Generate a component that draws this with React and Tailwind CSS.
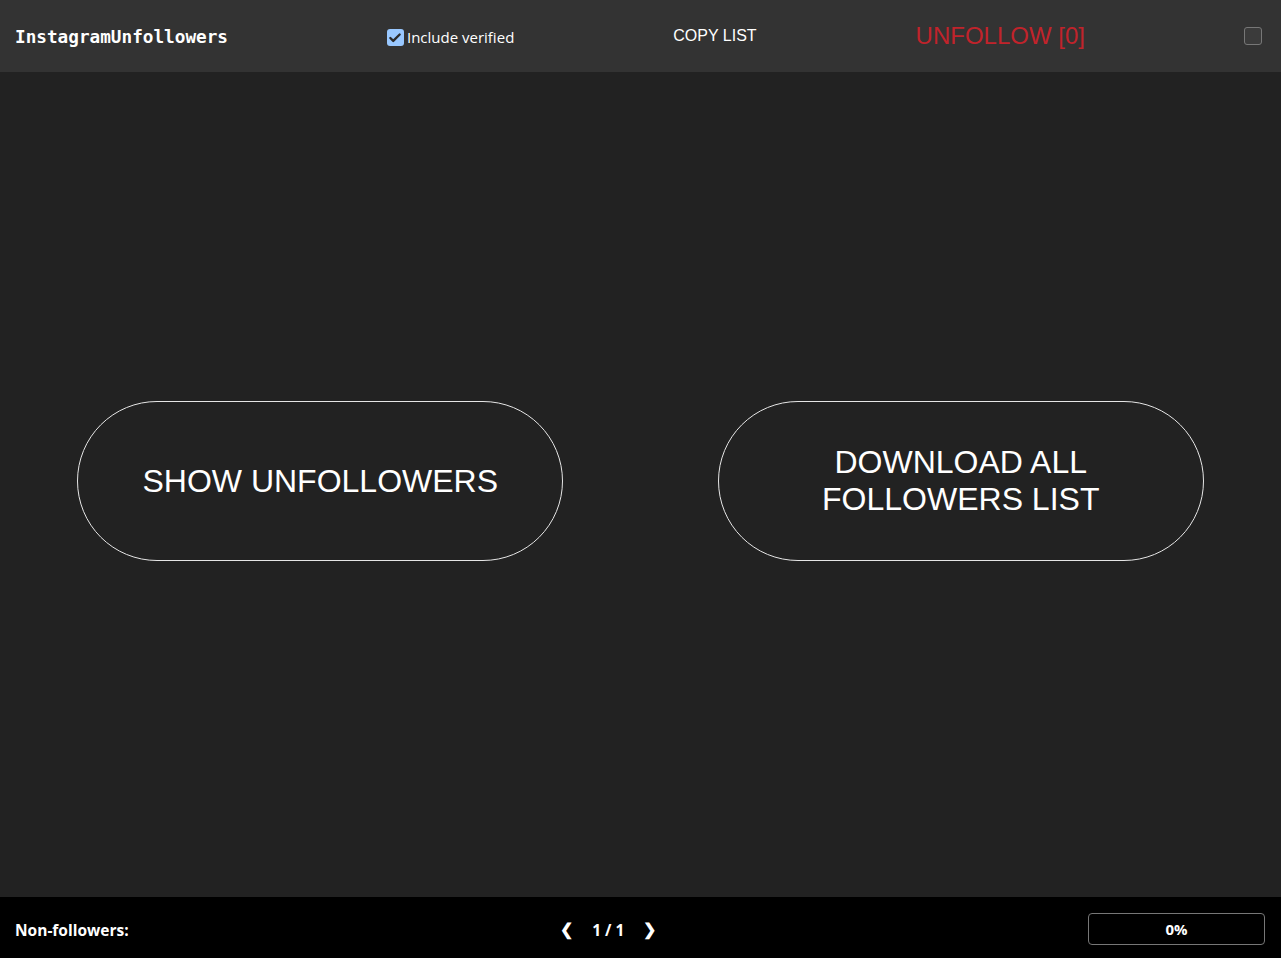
import { Check } from 'lucide-react';

function Pill({ children }) {
  return (
    <button className="flex h-[160px] w-[486px] items-center justify-center rounded-full border border-[#e6e6e6] bg-transparent px-10 text-center font-['Liberation_Sans',Arial,sans-serif] text-[32px] leading-[37px] text-white">
      {children}
    </button>
  );
}

export default function App() {
  return (
    <div className="flex h-[958px] flex-col bg-[#222] text-white">
      <header className="flex h-[72px] shrink-0 items-center justify-between bg-[#333] pl-[15px] pr-[19px]">
        <div className="pt-[2px] font-['DejaVu_Sans_Mono',monospace] text-[17.7px] font-bold">InstagramUnfollowers</div>
        <label className="flex items-center gap-[3px] pt-[3px] font-['Open_Sans',sans-serif] text-[15px]">
          <span className="flex h-[17px] w-[17px] items-center justify-center rounded-[3px] bg-[#99c8ff]">
            <Check size={14} strokeWidth={4} className="text-[#2a2a2a]" />
          </span>
          Include verified
        </label>
        <div className="font-['Liberation_Sans',Arial,sans-serif] text-[16px]">COPY LIST</div>
        <div className="font-['Liberation_Sans',Arial,sans-serif] text-[24px] text-[#c1232b]">UNFOLLOW [0]</div>
        <span className="h-[18px] w-[18px] rounded-[3px] border border-[#777] bg-[#3b3b3b]" />
      </header>

      <main className="flex flex-1 items-center justify-around pb-[7px]">
        <Pill>SHOW UNFOLLOWERS</Pill>
        <Pill>
          DOWNLOAD ALL
          <br />
          FOLLOWERS LIST
        </Pill>
      </main>

      <footer className="flex h-[61px] shrink-0 items-center justify-between bg-black pl-[15px] pr-[16px] pt-[3px] font-['Open_Sans',sans-serif] text-[15.5px] font-bold">
        <div className="pt-[3px]">Non-followers:</div>
        <div className="flex items-center gap-[19px]">
          <span className="text-[16px] font-black">❮</span>
          <span className="pt-[3px]">1 / 1</span>
          <span className="text-[16px] font-black">❯</span>
        </div>
        <div className="flex h-[32px] w-[177px] items-center justify-center rounded-[4px] border border-[#777] text-[15px]">0%</div>
      </footer>
    </div>
  );
}
